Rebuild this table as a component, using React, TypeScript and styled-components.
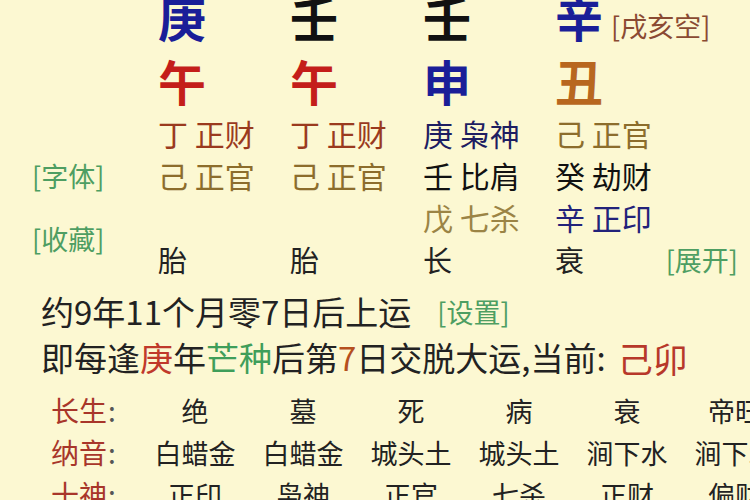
import React from "react";
import styled, { createGlobalStyle } from "styled-components";

const Global = createGlobalStyle`
  html, body { margin: 0; padding: 0; background: #fcf8d2; }
  body { overflow: hidden; }
`;

const FONT = `"Noto Sans CJK SC", "Noto Sans", sans-serif`;

const Page = styled.div`
  width: 750px;
  height: 500px;
  overflow: hidden;
  background: #fcf8d2;
  font-family: ${FONT};
  color: #222;
  display: flex;
  flex-direction: column;
`;

const Chart = styled.div`
  display: grid;
  grid-template-columns: 158px 132px 133px 132px 1fr;
  grid-template-rows: 64px 64px repeat(4, 42px);
  margin-top: -16px;
`;

type Place = { $col: number; $row: number; $span?: number };

const placed = (p: Place) =>
  `grid-column: ${p.$col}; grid-row: ${p.$row} / span ${p.$span ?? 1};`;

const StemCell = styled.div<Place & { $color: string }>`
  ${(p) => placed(p)}
  display: flex;
  align-items: center;
  font-size: 48px;
  font-weight: 700;
  line-height: 1;
  color: ${(p) => p.$color};
  white-space: nowrap;
`;

const VoidTag = styled.span`
  font-size: 27px;
  font-weight: 400;
  color: #8a4a32;
  margin-left: 8px;
  margin-top: 18px;
`;

const HiddenCell = styled.div<Place & { $color: string }>`
  ${(p) => placed(p)}
  display: flex;
  align-items: center;
  font-size: 30px;
  line-height: 1;
  color: ${(p) => p.$color};
  white-space: pre;
`;

const StateCell = styled.div<Place>`
  ${(p) => placed(p)}
  display: flex;
  align-items: center;
  justify-content: space-between;
  padding-right: 12px;
  font-size: 29px;
  line-height: 1;
  color: #222;
  white-space: nowrap;
`;

const SideLink = styled.div<Place>`
  ${(p) => placed(p)}
  display: flex;
  align-items: center;
  padding-left: 32px;
  font-size: 27px;
  line-height: 1;
  color: #4e9e62;
  white-space: nowrap;
`;

const Link = styled.span`
  font-size: 27px;
  color: #4e9e62;
`;

const LuckLine = styled.div<{ $top: number }>`
  display: flex;
  align-items: center;
  height: 46px;
  margin-top: ${(p) => p.$top}px;
  padding-left: 41px;
  font-size: 33px;
  color: #222;
  white-space: nowrap;
`;

const Tint = styled.span<{ $color: string }>`
  color: ${(p) => p.$color};
`;

const Spacer = styled.span<{ $w: number }>`
  display: inline-block;
  width: ${(p) => p.$w}px;
`;

const Current = styled.span`
  font-size: 35px;
  color: #b7382a;
  margin-left: 12px;
`;

const Table = styled.div`
  display: grid;
  grid-template-columns: 90px repeat(6, 108px);
  grid-auto-rows: 42px;
  margin-top: 9px;
  padding-left: 51px;
`;

const RowLabel = styled.div`
  display: flex;
  align-items: center;
  font-size: 28px;
  color: #a8362a;
  white-space: nowrap;
`;

const Colon = styled.span`
  color: #555;
  margin-left: 1px;
`;

const Value = styled.div`
  display: flex;
  align-items: center;
  justify-content: center;
  font-size: 27px;
  color: #222;
  white-space: nowrap;
`;

const BLUE = "#1a1e98";
const BLACK = "#111";
const RED = "#c41e1a";
const ORANGE = "#b8671f";
const RUST = "#9a3a1e";
const OLIVE = "#8c6d2c";
const NAVY = "#1e1e62";
const KHAKI = "#9b8445";
const INDIGO = "#22227a";

type Pillar = {
  stem: string;
  stemColor: string;
  branch: string;
  branchColor: string;
  hidden: { t: string; c: string }[];
  state: string;
};

const pillars: Pillar[] = [
  {
    stem: "庚",
    stemColor: BLUE,
    branch: "午",
    branchColor: RED,
    hidden: [
      { t: "丁 正财", c: RUST },
      { t: "己 正官", c: OLIVE },
    ],
    state: "胎",
  },
  {
    stem: "壬",
    stemColor: BLACK,
    branch: "午",
    branchColor: RED,
    hidden: [
      { t: "丁 正财", c: RUST },
      { t: "己 正官", c: OLIVE },
    ],
    state: "胎",
  },
  {
    stem: "壬",
    stemColor: BLACK,
    branch: "申",
    branchColor: BLUE,
    hidden: [
      { t: "庚 枭神", c: NAVY },
      { t: "壬 比肩", c: BLACK },
      { t: "戊 七杀", c: KHAKI },
    ],
    state: "长",
  },
  {
    stem: "辛",
    stemColor: BLUE,
    branch: "丑",
    branchColor: ORANGE,
    hidden: [
      { t: "己 正官", c: OLIVE },
      { t: "癸 劫财", c: BLACK },
      { t: "辛 正印", c: INDIGO },
    ],
    state: "衰",
  },
];

const table: { label: string; values: string[] }[] = [
  { label: "长生", values: ["绝", "墓", "死", "病", "衰", "帝旺"] },
  { label: "纳音", values: ["白蜡金", "白蜡金", "城头土", "城头土", "涧下水", "涧下水"] },
  { label: "十神", values: ["正印", "枭神", "正官", "七杀", "正财", "偏财"] },
];

export default function App() {
  return (
    <Page>
      <Global />
      <Chart>
        {pillars.map((p, i) => {
          const col = i + 2;
          return (
            <React.Fragment key={i}>
              <StemCell $col={col} $row={1} $color={p.stemColor}>
                {p.stem}
                {i === 3 && <VoidTag>[戌亥空]</VoidTag>}
              </StemCell>
              <StemCell $col={col} $row={2} $color={p.branchColor}>
                {p.branch}
              </StemCell>
              {p.hidden.map((h, j) => (
                <HiddenCell key={j} $col={col} $row={3 + j} $color={h.c}>
                  {h.t}
                </HiddenCell>
              ))}
              <StateCell $col={col} $row={6}>
                {p.state}
                {i === 3 && <Link>[展开]</Link>}
              </StateCell>
            </React.Fragment>
          );
        })}
        <SideLink $col={1} $row={4}>
          [字体]
        </SideLink>
        <SideLink $col={1} $row={5} $span={2}>
          [收藏]
        </SideLink>
      </Chart>
      <LuckLine $top={8}>
        约9年11个月零7日后上运
        <Spacer $w={26} />
        <Link>[设置]</Link>
      </LuckLine>
      <LuckLine $top={0}>
        即每逢<Tint $color="#c0392b">庚</Tint>年<Tint $color="#3f9e5a">芒种</Tint>后第
        <Tint $color="#b5501e">7</Tint>日交脱大运,当前:
        <Current>己卯</Current>
      </LuckLine>
      <Table>
        {table.map((r) => (
          <React.Fragment key={r.label}>
            <RowLabel>
              {r.label}
              <Colon>:</Colon>
            </RowLabel>
            {r.values.map((v, k) => (
              <Value key={k}>{v}</Value>
            ))}
          </React.Fragment>
        ))}
      </Table>
    </Page>
  );
}
